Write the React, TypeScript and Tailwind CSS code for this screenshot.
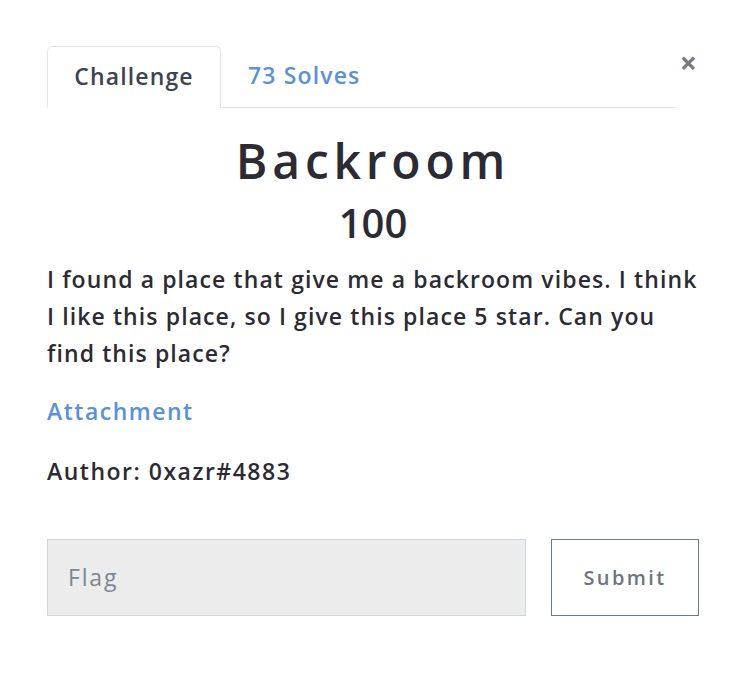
import React from 'react';

export default function App() {
  const font = { fontFamily: '"Open Sans", "Noto Sans", sans-serif' };
  return (
    <div className="min-h-[687px] w-[745px] bg-white text-[#2b2b33]" style={font}>
      <div className="relative pl-[47px] pr-[46px] pt-[46px]">
        <button className="absolute right-[48px] top-[48px] text-[30px] leading-none font-bold text-[#7a7a7a]">
          ×
        </button>
        <div className="flex mr-[24px] border-b border-[#dde3e8]">
          <div className="-mb-px h-[62px] w-[174px] flex items-center justify-center rounded-t-[5px] border border-b-white border-[#e3e6ea] bg-white pb-[2px] text-[23px] font-semibold tracking-[0.05em] text-[#3d4452]">
            Challenge
          </div>
          <div className="h-[61px] flex items-center pl-[27px] pb-[2px] text-[23px] font-semibold tracking-[0.05em] text-[#5b91d8]">
            73 Solves
          </div>
        </div>
        <h1 className="mt-[23px] text-center text-[48px] leading-[60px] font-semibold tracking-[0.1em] text-[#2c2b33]">
          Backroom
        </h1>
        <div className="mt-[4px] text-center text-[40px] leading-[56px] font-semibold text-[#2c2b33]">
          100
        </div>
        <p className="mt-[10px] text-[23px] leading-[37px] font-semibold tracking-[1.1px] text-[#2c2b33]">
          I found a place that give me a backroom vibes. I think
          <br />
          I like this place, so I give this place 5 star. Can you
          <br />
          find this place?
        </p>
        <a className="mt-[21px] block text-[23px] leading-[37px] font-semibold tracking-[1.5px] text-[#5b91d8]">Attachment</a>
        <div className="mt-[23px] text-[23px] leading-[37px] font-semibold tracking-[1.5px] text-[#2c2b33]">Author: 0xazr#4883</div>
        <div className="mt-[49px] flex gap-[25px]">
          <div className="h-[77px] w-[479px] shrink-0 flex items-center border border-[#cdd6de] bg-[#ececec] px-[20px] text-[23px] tracking-[0.08em] text-[#7e8791]">
            Flag
          </div>
          <button className="h-[77px] w-[148px] shrink-0 border border-[#6a7988] bg-white text-[20px] font-semibold tracking-[0.12em] text-[#6c7580]">
            Submit
          </button>
        </div>
      </div>
    </div>
  );
}
